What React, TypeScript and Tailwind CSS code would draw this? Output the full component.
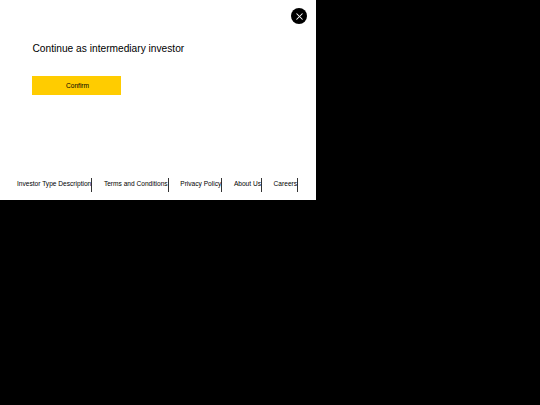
import { X } from 'lucide-react';

const links = ['Investor Type Description', 'Terms and Conditions', 'Privacy Policy', 'About Us', 'Careers'];

export default function App() {
  return (
    <div className="min-h-[405px] bg-black font-['Liberation_Sans',Arial,sans-serif]">
      <div className="relative flex h-[199.5px] w-[316px] flex-col bg-white text-black">
        <button className="absolute left-[291px] top-2 flex h-4 w-4 items-center justify-center rounded-full bg-black">
          <X className="h-[11px] w-[11px] text-white" strokeWidth={2.2} />
        </button>
        <div className="flex-1 px-[32px] pt-[42px]">
          <h1 className="pl-[0.5px] text-[10.2px] leading-[13px]">Continue as intermediary investor</h1>
          <button className="mt-[21px] h-[19px] w-[89px] bg-[#ffcc00] pl-[2px] text-[6.6px] leading-[19px]">Confirm</button>
        </div>
        <div className="mb-[8px] flex h-[14px] items-stretch gap-[11.6px] pl-[17px] text-[6.6px] leading-[11px]">
          {links.map((link) => (
            <span key={link} className="whitespace-nowrap border-r border-[#333]">
              {link}
            </span>
          ))}
        </div>
      </div>
    </div>
  );
}
